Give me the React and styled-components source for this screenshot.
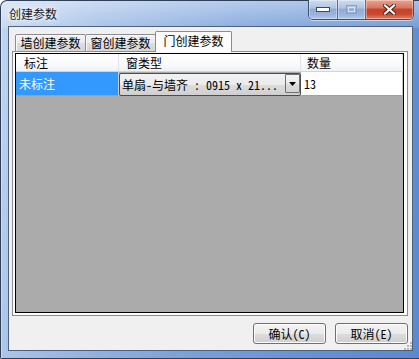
import React from "react";
import styled, { createGlobalStyle } from "styled-components";

const GlobalStyle = createGlobalStyle`
  html, body {
    margin: 0;
    padding: 0;
    overflow: hidden;
    background: #fff;
  }
`;

const UI_FONT = `"Noto Sans Mono CJK SC", "Noto Sans CJK SC", sans-serif`;

const Window = styled.div`
  width: 419px;
  height: 359px;
  box-sizing: border-box;
  display: flex;
  flex-direction: column;
  padding: 0 6px 6px 7px;
  border: 1px solid #2f3f58;
  border-right: none;
  border-radius: 7px 0 0 2px;
  background:
    linear-gradient(180deg, rgba(255, 255, 255, 0.45) 0px, rgba(255, 255, 255, 0.15) 26px, rgba(255, 255, 255, 0) 28px),
    linear-gradient(100deg, #c2d6f0 0%, #9dbbe6 22%, #7aa2db 50%, #6592d3 78%, #5a89cf 100%);
  box-shadow: inset 1px 0 0 rgba(255, 255, 255, 0.35);
  font-family: ${UI_FONT};
  font-size: 12px;
  color: #000;
`;

const TitleBar = styled.div`
  height: 26px;
  display: flex;
  align-items: flex-start;
  justify-content: space-between;
  margin-top: -1px;
  padding-left: 1px;
`;

const Title = styled.div`
  margin-top: 6px;
  font-family: "Noto Sans CJK SC", sans-serif;
  font-size: 12px;
  line-height: 16px;
  color: #1a1a1a;
  text-shadow: 0 0 5px #fff, 0 0 8px rgba(255, 255, 255, 0.9);
`;

const Caption = styled.div`
  display: flex;
  height: 19px;
  margin-right: -1px;
  border: 1px solid #3d4f6c;
  border-top: none;
  border-radius: 0 0 5px 5px;
  overflow: hidden;
  box-shadow: 0 1px 0 rgba(255, 255, 255, 0.5);
`;

const CapButton = styled.div`
  width: ${(p) => p.$w}px;
  display: flex;
  align-items: center;
  justify-content: center;
  border-left: ${(p) => (p.$first ? "none" : "1px solid #5a6f92")};
  background: ${(p) =>
    p.$close
      ? "linear-gradient(180deg, #e8a493 0%, #d9765f 40%, #c4432a 50%, #c9482e 75%, #e0836a 100%)"
      : "linear-gradient(180deg, #d0ddf0 0%, #b0c5e4 40%, #93acd5 50%, #9bb6df 80%, #b3c9ea 100%)"};
  box-shadow: inset 0 0 0 1px rgba(255, 255, 255, 0.35);
`;

const Client = styled.div`
  width: 405px;
  height: 325px;
  box-sizing: border-box;
  position: relative;
  display: flex;
  flex-direction: column;
  border: 1px solid #4f607b;
  background: #f0f0f0;
`;

const TabStrip = styled.div`
  height: 25px;
  display: flex;
  align-items: flex-end;
  padding-left: 6px;
  margin-bottom: -1px;
  position: relative;
  z-index: 1;
`;

const Tab = styled.div`
  box-sizing: border-box;
  width: ${(p) => (p.$active ? 77 : 71)}px;
  height: ${(p) => (p.$active ? 21 : 18)}px;
  margin-left: ${(p) => (p.$first ? 0 : -1)}px;
  display: flex;
  align-items: center;
  justify-content: center;
  padding-bottom: ${(p) => (p.$active ? 2 : 0)}px;
  border: 1px solid #898c95;
  border-bottom: ${(p) => (p.$active ? "none" : "1px solid #898c95")};
  border-radius: 2px 2px 0 0;
  background: ${(p) =>
    p.$active
      ? "#fcfcfc"
      : "linear-gradient(180deg, #f3f3f3 0%, #ebebeb 50%, #dedede 51%, #d6d6d6 100%)"};
  box-shadow: ${(p) => (p.$active ? "none" : "inset 1px 1px 0 #fafafa")};
  line-height: 14px;
  white-space: nowrap;
`;

const Panel = styled.div`
  width: 396px;
  height: 265px;
  margin-left: 3px;
  box-sizing: border-box;
  padding: 1px 3px 2px 2px;
  border: 1px solid #898c95;
  background: #fcfcfc;
`;

const Grid = styled.div`
  height: 100%;
  box-sizing: border-box;
  border: 1px solid #000;
  background: #ababab;
  display: flex;
  flex-direction: column;
`;

const Row = styled.div`
  display: grid;
  grid-template-columns: 103px 182px 1fr;
  height: ${(p) => (p.$header ? 18 : 24)}px;
  box-sizing: border-box;
`;

const HeadCell = styled.div`
  display: flex;
  align-items: center;
  padding-left: ${(p) => p.$pad}px;
  background: linear-gradient(180deg, #ffffff 0%, #fafbfc 50%, #f1f2f4 100%);
  border-right: 1px solid #e0e2e6;
  border-bottom: 1px solid #d5d5d5;
  line-height: 14px;
`;

const Cell = styled.div`
  display: flex;
  align-items: center;
  padding-left: 3px;
  background: ${(p) => (p.$selected ? "#3399ff" : "#ffffff")};
  color: ${(p) => (p.$selected ? "#ffffff" : "#000")};
  border-right: 1px solid #c8c8c8;
  border-bottom: 1px solid #a0a0a0;
  line-height: 14px;
`;

const Combo = styled.div`
  display: flex;
  align-items: stretch;
  box-sizing: border-box;
  margin: 1px 0 0 0;
  border: 1px solid #4d4d4d;
  border-radius: 2px;
  background: linear-gradient(180deg, #f2f2f2 0%, #ebebeb 50%, #dddddd 51%, #cfcfcf 100%);
`;

const ComboText = styled.div`
  flex: 1;
  display: flex;
  align-items: center;
  padding-left: 2px;
  white-space: nowrap;
  overflow: hidden;
  line-height: 14px;
`;

const DropButton = styled.div`
  width: 15px;
  margin: 0 0 2px 0;
  box-sizing: border-box;
  display: flex;
  align-items: center;
  justify-content: center;
  border: 1px solid #707070;
  border-radius: 1px;
  background: linear-gradient(180deg, #f6f6f6 0%, #e9e9e9 50%, #dcdcdc 51%, #d2d2d2 100%);
`;

const Footer = styled.div`
  display: flex;
  justify-content: flex-end;
  gap: 9px;
  margin-top: 7px;
  padding-right: 4px;
`;

const Button = styled.button`
  width: 73px;
  height: 21px;
  padding: 0;
  box-sizing: border-box;
  border: 1px solid #707070;
  border-radius: 3px;
  background: linear-gradient(180deg, #f2f2f2 0%, #ebebeb 50%, #dddddd 51%, #cfcfcf 100%);
  box-shadow: inset 0 0 0 1px #fcfcfc;
  font-family: ${UI_FONT};
  font-size: 12px;
  line-height: 14px;
  color: #000;
`;

const Grip = styled.svg`
  position: absolute;
  right: 0;
  bottom: 0;
`;

const MinIcon = () => (
  <svg width="14" height="5" viewBox="0 0 14 5">
    <rect x="0.5" y="0.5" width="13" height="4" fill="#fff" stroke="#3a4a63" />
  </svg>
);

const MaxIcon = () => (
  <svg width="11" height="9" viewBox="0 0 11 9">
    <rect x="0.5" y="0.5" width="10" height="8" fill="none" stroke="#8aa0c2" />
    <rect x="2.5" y="2.5" width="6" height="4" fill="none" stroke="#d8e3f2" />
  </svg>
);

const CloseIcon = () => (
  <svg width="13" height="11" viewBox="0 0 13 11">
    <path d="M2 1.5 L11 9.5 M11 1.5 L2 9.5" stroke="#4a1a10" strokeWidth="4" strokeLinecap="square" />
    <path d="M2 1.5 L11 9.5 M11 1.5 L2 9.5" stroke="#fff" strokeWidth="2.2" strokeLinecap="square" />
  </svg>
);

const tabs = ["墙创建参数", "窗创建参数", "门创建参数"];

export default function App() {
  return (
    <>
      <GlobalStyle />
      <Window>
        <TitleBar>
          <Title>创建参数</Title>
          <Caption>
            <CapButton $w={28} $first>
              <MinIcon />
            </CapButton>
            <CapButton $w={27}>
              <MaxIcon />
            </CapButton>
            <CapButton $w={47} $close>
              <CloseIcon />
            </CapButton>
          </Caption>
        </TitleBar>
        <Client>
          <TabStrip>
            {tabs.map((t, i) => (
              <Tab key={t} $first={i === 0} $active={i === 2}>
                {t}
              </Tab>
            ))}
          </TabStrip>
          <Panel>
            <Grid>
              <Row $header>
                <HeadCell $pad={8}>标注</HeadCell>
                <HeadCell $pad={7}>窗类型</HeadCell>
                <HeadCell $pad={6}>数量</HeadCell>
              </Row>
              <Row>
                <Cell $selected>未标注</Cell>
                <Combo>
                  <ComboText>单扇-与墙齐 : 0915 x 21...</ComboText>
                  <DropButton>
                    <svg width="7" height="4" viewBox="0 0 7 4">
                      <path d="M0 0 H7 L3.5 4 Z" fill="#000" />
                    </svg>
                  </DropButton>
                </Combo>
                <Cell>13</Cell>
              </Row>
            </Grid>
          </Panel>
          <Footer>
            <Button>确认(C)</Button>
            <Button>取消(E)</Button>
          </Footer>
          <Grip width="8" height="8" viewBox="0 0 8 8">
            {[
              [6, 0],
              [6, 3],
              [3, 3],
              [6, 6],
              [3, 6],
              [0, 6],
            ].map(([x, y]) => (
              <rect key={`${x}-${y}`} x={x} y={y} width="2" height="2" fill="#b8b8b8" />
            ))}
          </Grip>
        </Client>
      </Window>
    </>
  );
}
